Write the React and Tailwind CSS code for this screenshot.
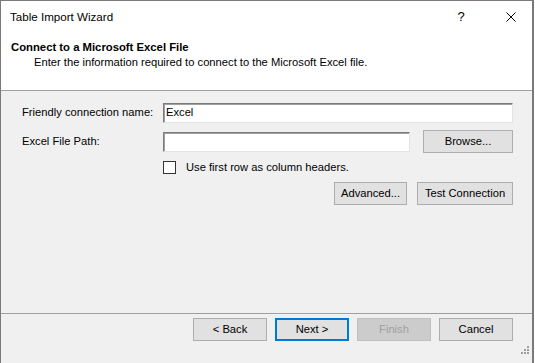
import React from 'react';

const font = {fontFamily: '"Liberation Sans", Arial, sans-serif'};

const TextBox = ({value = '', className = ''}) => (
  <div
    className={`h-[20px] bg-white border border-t-[#7a7a7a] border-l-[#7a7a7a] border-r-[#e3e3e3] border-b-[#e3e3e3] shadow-[inset_1px_1px_0_#a0a0a0] flex items-center pl-[2px] text-[11.2px] text-black ${className}`}>
    {value}
  </div>
);

const WinButton = ({children, className = '', primary, disabled}) => (
  <button
    type="button"
    className={`h-[23px] text-[11.2px] flex items-center justify-center ${
      disabled
        ? 'bg-[#cccccc] border border-[#bfbfbf] text-[#a0a0a0]'
        : primary
        ? 'bg-[#e1e1e1] border-2 border-[#0078d7] text-black'
        : 'bg-[#e1e1e1] border border-[#adadad] text-black'
    } ${className}`}>
    {children}
  </button>
);

export default function App() {
  return (
    <div className="w-[535px] h-[363px] bg-white overflow-hidden" style={font}>
      <div className="relative w-[534px] h-[363px] border-l border-t border-r-2 border-[#7a7a7a] flex flex-col bg-[#f0f0f0]">
        {/* title bar */}
        <div className="h-[31px] bg-white flex items-center">
          <div className="pl-[9px] text-[11.6px] text-black">Table Import Wizard</div>
          <div className="ml-auto flex items-center">
            <span className="text-[13px] text-black w-[10px] text-center">?</span>
            <svg width="10" height="10" viewBox="0 0 10 10" className="ml-[40px] mr-[16px]">
              <path d="M0.5 0.5 L9.5 9.5 M9.5 0.5 L0.5 9.5" stroke="#000" strokeWidth="1" />
            </svg>
          </div>
        </div>

        {/* header */}
        <div className="h-[59px] bg-white border-b border-[#a0a0a0] pt-[8px]">
          <div className="pl-[10px] text-[11.3px] leading-[15px] font-bold text-black">
            Connect to a Microsoft Excel File
          </div>
          <div className="pl-[33px] text-[11.2px] leading-[15px] text-black">
            Enter the information required to connect to the Microsoft Excel file.
          </div>
        </div>

        {/* body */}
        <div className="flex-1 pt-[11px] pl-[21px] pr-[19px] flex flex-col">
          <div className="flex items-center h-[21px]">
            <div className="w-[141px] text-[11.2px] text-black">Friendly connection name:</div>
            <TextBox value="Excel" className="flex-1" />
          </div>
          <div className="flex items-center h-[23px] mt-[7px]">
            <div className="w-[141px] text-[11.2px] text-black">Excel File Path:</div>
            <TextBox className="w-[247px]" />
            <WinButton className="ml-auto w-[90px]">Browse...</WinButton>
          </div>
          <div className="flex items-center h-[16px] mt-[6px] pl-[141px]">
            <div className="w-[13px] h-[13px] bg-white border border-[#333333]" />
            <div className="ml-[10px] text-[11.2px] text-black">Use first row as column headers.</div>
          </div>
          <div className="flex justify-end gap-[10px] mt-[7px]">
            <WinButton className="w-[73px]">Advanced...</WinButton>
            <WinButton className="w-[96px]">Test Connection</WinButton>
          </div>
        </div>

        {/* footer */}
        <div className="h-[50px] border-t border-[#a0a0a0] pt-[4px] pr-[19px] flex justify-end gap-[8px]">
          <WinButton className="w-[74px]">&lt; Back</WinButton>
          <WinButton primary className="w-[74px]">Next &gt;</WinButton>
          <WinButton disabled className="w-[74px]">Finish</WinButton>
          <WinButton className="w-[74px]">Cancel</WinButton>
        </div>

        {/* resize grip */}
        <svg width="8" height="8" viewBox="0 0 8 8" className="absolute right-[3px] bottom-[9px]">
          <rect x="6" y="0" width="2" height="2" fill="#a0a0a0" />
          <rect x="3" y="3" width="2" height="2" fill="#a0a0a0" />
          <rect x="6" y="3" width="2" height="2" fill="#a0a0a0" />
          <rect x="0" y="6" width="2" height="2" fill="#a0a0a0" />
          <rect x="3" y="6" width="2" height="2" fill="#a0a0a0" />
          <rect x="6" y="6" width="2" height="2" fill="#a0a0a0" />
        </svg>
      </div>
    </div>
  );
}
